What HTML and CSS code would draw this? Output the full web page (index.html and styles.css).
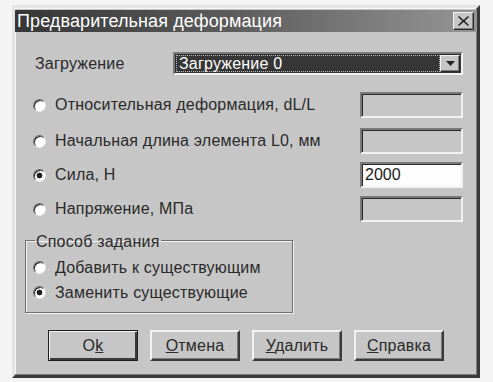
FILE: index.html
```html
<!DOCTYPE html>
<html lang="ru">
<head>
<meta charset="utf-8">
<title>Предварительная деформация</title>
<link rel="stylesheet" href="styles.css">
</head>
<body>
<div class="dialog">
  <div class="titlebar">
    <span class="title">Предварительная деформация</span>
    <span class="close"><svg width="11" height="10" viewBox="0 0 11 10"><path d="M1 0 L5.5 4 L10 0 L11 1 L6.8 5 L11 9 L10 10 L5.5 6 L1 10 L0 9 L4.2 5 L0 1 Z" fill="#222"/></svg></span>
  </div>
  <div class="body">
    <div class="load-row">
      <span class="load-label">Загружение</span>
      <div class="combo">
        <span class="combo-text">Загружение 0</span>
        <span class="combo-btn"><svg width="9" height="5" viewBox="0 0 9 5"><path d="M0 0 H9 L4.5 5 Z" fill="#222"/></svg></span>
      </div>
    </div>
    <div class="options">
      <div class="opt-row">
        <label class="radio-label"><span class="radio"></span>Относительная деформация, dL/L</label>
        <span class="field disabled"></span>
      </div>
      <div class="opt-row">
        <label class="radio-label"><span class="radio"></span>Начальная длина элемента L0, мм</label>
        <span class="field disabled"></span>
      </div>
      <div class="opt-row">
        <label class="radio-label"><span class="radio checked"></span>Сила, Н</label>
        <span class="field active">2000</span>
      </div>
      <div class="opt-row">
        <label class="radio-label"><span class="radio"></span>Напряжение, МПа</label>
        <span class="field disabled"></span>
      </div>
    </div>
    <fieldset class="group">
      <legend class="group-title">Способ задания</legend>
      <label class="radio-label"><span class="radio"></span>Добавить к существующим</label>
      <label class="radio-label"><span class="radio checked"></span>Заменить существующие</label>
    </fieldset>
    <div class="buttons">
      <button class="btn default">O<u>k</u></button>
      <button class="btn"><u>О</u>тмена</button>
      <button class="btn"><u>У</u>далить</button>
      <button class="btn"><u>С</u>правка</button>
    </div>
  </div>
</div>
</body>
</html>
```

FILE: styles.css
```css
* { box-sizing: border-box; }
html, body { margin: 0; padding: 0; }
body {
  background: #f4f4f4;
  font-family: "Liberation Sans", Arial, sans-serif;
  color: #2a2a2a;
  width: 493px;
  height: 382px;
  overflow: hidden;
}
.dialog {
  margin: 5px 0 0 12px;
  width: 468px;
  height: 373px;
  background: #c6c6c6;
  border: 3px solid;
  border-color: #e4e4e4 #3a3a3a #3a3a3a #e4e4e4;
  box-shadow: inset -1px -1px #7c7c7c, inset 1px 1px #f6f6f6;
  padding-top: 2px;
  display: flex;
  flex-direction: column;
}
.titlebar {
  height: 22px;
  background: linear-gradient(to right, #363636 0%, #5a5a5a 45%, #959595 100%);
  display: flex;
  align-items: center;
  justify-content: space-between;
  padding: 0 3px 0 2px;
}
.title {
  color: #fff;
  font-size: 18px;
  line-height: 22px;
  letter-spacing: 0.1px;
}
.close {
  width: 21px;
  height: 18px;
  background: #c6c6c6;
  border: 1px solid;
  border-color: #f2f2f2 #2a2a2a #2a2a2a #f2f2f2;
  box-shadow: inset -1px -1px #7c7c7c;
  display: flex;
  align-items: center;
  justify-content: center;
}
.body {
  font-size: 16px;
  letter-spacing: 0.2px;
  display: flex;
  flex-direction: column;
}
.load-row {
  margin: 20px 0 0 20px;
  height: 23px;
  display: flex;
  align-items: center;
}
.load-label {
  width: 138px;
}
.combo {
  width: 290px;
  height: 23px;
  border: 2px solid;
  border-color: #7a7a7a #f2f2f2 #f2f2f2 #7a7a7a;
  box-shadow: inset 1px 1px #2a2a2a;
  background: #363636;
  display: flex;
  align-items: stretch;
  padding: 1px;
}
.combo-text {
  flex: 1;
  color: #fff;
  line-height: 15px;
  padding-left: 2px;
  border: 1px dotted #bbb;
}
.combo-btn {
  width: 20px;
  background: #c6c6c6;
  border: 1px solid;
  border-color: #f2f2f2 #2a2a2a #2a2a2a #f2f2f2;
  box-shadow: inset -1px -1px #7c7c7c;
  display: flex;
  align-items: center;
  justify-content: center;
}
.options {
  margin: 17px 0 0 18px;
  width: 430px;
  display: flex;
  flex-direction: column;
  gap: 8px;
}
.opt-row {
  height: 26px;
  display: flex;
  align-items: center;
  justify-content: space-between;
}
.opt-row:nth-child(2) { margin-top: 2px; }
.radio-label {
  display: flex;
  align-items: center;
  gap: 9px;
  height: 25px;
}
.radio {
  width: 13px;
  height: 13px;
  border-radius: 50%;
  background: #fff;
  border: 1px solid;
  border-color: #6a6a6a #e8e8e8 #e8e8e8 #6a6a6a;
  box-shadow: inset 1px 1px #2a2a2a;
  flex: none;
}
.radio.checked {
  background: radial-gradient(circle at 50% 50%, #1e1e1e 0 2.6px, #fff 3.2px);
}
.field {
  width: 103px;
  height: 26px;
  border: 2px solid;
  border-color: #7a7a7a #f2f2f2 #f2f2f2 #7a7a7a;
  box-shadow: inset 1px 1px #2a2a2a;
  padding-left: 3px;
  line-height: 22px;
  font-size: 16px;
  letter-spacing: 0;
}
.field.disabled { background: #c6c6c6; }
.field.active { background: #fdfdfd; color: #1a1a1a; }
.group {
  margin: 10px 0 0 10px;
  width: 268px;
  height: 81px;
  border: 1px solid #6e6e6e;
  box-shadow: 1px 1px #f2f2f2, inset 1px 1px #f2f2f2;
  padding: 7px 0 0 7px;
  display: flex;
  flex-direction: column;
}
.group-title {
  padding: 0 1px;
  margin-left: 2px;
  line-height: 16px;
  position: relative;
  top: 2px;
}
.group .radio-label { height: 25px; }
.buttons {
  margin: 17px 0 0 33px;
  display: flex;
  gap: 12px;
}
.btn {
  width: 90px;
  height: 31px;
  font-family: "Liberation Sans", Arial, sans-serif;
  font-size: 16px;
  letter-spacing: 0.2px;
  color: #2a2a2a;
  background: #c6c6c6;
  border: 2px solid;
  border-color: #f2f2f2 #3a3a3a #3a3a3a #f2f2f2;
  box-shadow: inset -1px -1px #7c7c7c;
  padding: 0;
}
.btn.default {
  border: 1px solid #1e1e1e;
  box-shadow: inset 1px 1px #f2f2f2, inset -2px -2px #3a3a3a;
}
```
